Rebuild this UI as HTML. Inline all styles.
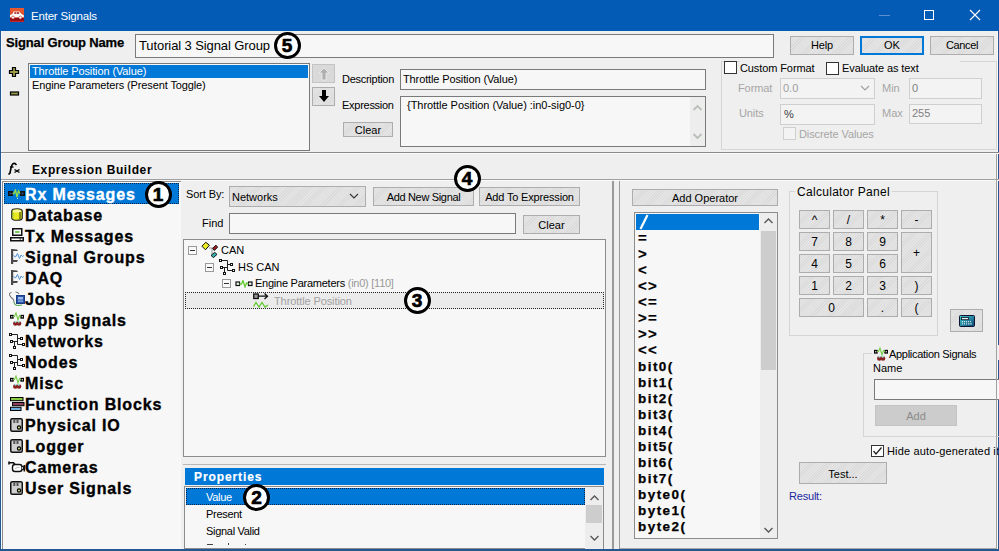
<!DOCTYPE html>
<html><head><meta charset="utf-8"><style>
html,body{margin:0;padding:0;}
body{width:999px;height:551px;overflow:hidden;position:relative;background:#efefef;font-family:"Liberation Sans",sans-serif;}
.t{position:absolute;white-space:nowrap;line-height:1;font-family:"Liberation Sans",sans-serif;}
.r{position:absolute;}
.circ{position:absolute;box-sizing:border-box;border:3px solid #000;border-radius:50%;background:#fff;display:flex;align-items:center;justify-content:center;font-family:"Liberation Sans",sans-serif;font-weight:bold;font-size:19px;line-height:1;-webkit-text-stroke:0.7px #000;}
</style></head><body>
<div class=r style='left:0px;top:0px;width:999px;height:31px;background:#045bb5;box-sizing:border-box;'></div>
<div class=r style='left:0px;top:31px;width:1px;height:520px;background:#24568f;box-sizing:border-box;'></div>
<div class=r style='left:1px;top:31px;width:1px;height:518px;background:#f4fbff;box-sizing:border-box;'></div>
<div class=r style='left:0px;top:549px;width:999px;height:2px;background:#24568f;box-sizing:border-box;'></div>
<div class=r style='left:998px;top:31px;width:1px;height:520px;background:#24568f;box-sizing:border-box;'></div>
<div class=r style='left:997px;top:31px;width:1px;height:518px;background:#fafafa;box-sizing:border-box;'></div>
<svg class=r style='left:10px;top:8px' width=14 height=14 viewBox='0 0 14 14'><defs><linearGradient id='tg' x1='0' y1='0' x2='0' y2='1'><stop offset='0' stop-color='#ea5a30'/><stop offset='0.7' stop-color='#d84828'/><stop offset='0.72' stop-color='#8a0a10'/><stop offset='0.88' stop-color='#9a1014'/><stop offset='1' stop-color='#d03030'/></linearGradient></defs><rect x=0 y=0 width=14 height=14 fill='url(#tg)' /><path d='M0 7 L2.5 6 L3.5 3.6 L9.4 3.6 L11.5 6 L13.8 7.2 L13.8 9.2 L0 9.2 Z' fill='#fff' /><rect x=4.3 y=4.2 width=2.2 height=1.6 fill='#a02020' /><rect x=7 y=4.2 width=2.2 height=1.6 fill='#a02020' /><circle cx=3 cy=9.6 r=1.5 fill='#fff' stroke='#b02020' stroke-width=0.6 /><circle cx=10.3 cy=9.6 r=1.5 fill='#fff' stroke='#b02020' stroke-width=0.6 /></svg>
<div class=t style='left:31px;top:11px;font-size:11.5px;font-weight:normal;color:#fff;letter-spacing:-0.2px;'>Enter Signals</div>
<div class=r style='left:879px;top:15px;width:11px;height:1px;background:#5f8fd0;box-sizing:border-box;'></div>
<div class=r style='left:924px;top:10px;width:10px;height:10px;background:transparent;border:1px solid #fff;box-sizing:border-box;'></div>
<svg class=r style='left:969px;top:9px' width=12 height=12 viewBox='0 0 12 12'><path d='M1 1 L11 11 M11 1 L1 11' stroke='#fff' stroke-width=1.1 fill='none' /></svg>
<div class=t style='left:6px;top:36px;font-size:13px;font-weight:bold;color:#000;letter-spacing:-0.15px;-webkit-text-stroke:0.25px #000'>Signal Group Name</div>
<div class=r style='left:135px;top:34px;width:639px;height:24px;background:#f7f7f7;border:1px solid #7a7a7a;box-sizing:border-box;'></div>
<div class=t style='left:139px;top:39px;font-size:13px;font-weight:normal;color:#000;letter-spacing:-0.1px;'>Tutorial 3 Signal Group</div>
<div class=circ style='left:273.5px;top:31.5px;width:27px;height:27px'><span>5</span></div>
<div class=r style='left:790px;top:36px;width:64px;height:19px;background:repeating-linear-gradient(135deg,#e5e5e5 0px,#e5e5e5 1px,#dbdbdb 1px,#dbdbdb 2px);border:1px solid #adadad;box-sizing:border-box;'></div>
<div class=t style='left:790px;width:64px;text-align:center;top:40px;font-size:11px;font-weight:normal;color:#000;letter-spacing:-0.2px;'>Help</div>
<div class=r style='left:860px;top:36px;width:64px;height:19px;background:repeating-linear-gradient(135deg,#e5e5e5 0px,#e5e5e5 1px,#dbdbdb 1px,#dbdbdb 2px);border:2px solid #0078d7;box-sizing:border-box;'></div>
<div class=t style='left:860px;width:64px;text-align:center;top:40px;font-size:11px;font-weight:normal;color:#000;letter-spacing:0px;'>OK</div>
<div class=r style='left:930px;top:36px;width:64px;height:19px;background:repeating-linear-gradient(135deg,#e5e5e5 0px,#e5e5e5 1px,#dbdbdb 1px,#dbdbdb 2px);border:1px solid #adadad;box-sizing:border-box;'></div>
<div class=t style='left:930px;width:64px;text-align:center;top:40px;font-size:11px;font-weight:normal;color:#000;letter-spacing:-0.35px;'>Cancel</div>
<svg class=r style='left:8px;top:66px' width=12 height=30 viewBox='0 0 12 30'><path d='M4.5 1.5 h3 v3 h3 v3 h-3 v3 h-3 v-3 h-3 v-3 h3 z' fill='#9a9a48' stroke='#000' stroke-width=1.2 /><rect x=2.5 y=26 width=8 height=3 fill='#9a9a48' stroke='#000' stroke-width=1.2 /></svg>
<div class=r style='left:28px;top:63px;width:282px;height:88px;background:#f7f7f7;border:1px solid #7a7a7a;box-sizing:border-box;'></div>
<div class=r style='left:30px;top:65px;width:278px;height:13px;background:#0078d7;box-sizing:border-box;'></div>
<div class=t style='left:32px;top:66px;font-size:11px;font-weight:normal;color:#fff;letter-spacing:-0.12px;'>Throttle Position (Value)</div>
<div class=t style='left:32px;top:80px;font-size:11px;font-weight:normal;color:#000;letter-spacing:-0.12px;'>Engine Parameters (Present Toggle)</div>
<div class=r style='left:312px;top:64px;width:23px;height:19px;background:#d9d9d9;border:1px solid #c4c4c4;box-sizing:border-box;'></div>
<svg class=r style='left:318px;top:67px' width=12 height=14><path d='M6 1 L11 6 L8 6 L8 13 L4 13 L4 6 L1 6 Z' fill='#b0b0b0' stroke='#f0f0f0' stroke-width=0.8 /></svg>
<div class=r style='left:312px;top:87px;width:23px;height:19px;background:repeating-linear-gradient(135deg,#e5e5e5 0px,#e5e5e5 1px,#dbdbdb 1px,#dbdbdb 2px);border:1px solid #adadad;box-sizing:border-box;'></div>
<svg class=r style='left:318px;top:89px' width=12 height=14><path d='M4 1 L8 1 L8 7 L11 7 L6 13 L1 7 L4 7 Z' fill='#000'  /></svg>
<div class=t style='left:342px;top:74px;font-size:11px;font-weight:normal;color:#000;letter-spacing:-0.27px;'>Description</div>
<div class=r style='left:400px;top:69px;width:306px;height:21px;background:#f7f7f7;border:1px solid #7a7a7a;box-sizing:border-box;'></div>
<div class=t style='left:403px;top:74px;font-size:11px;font-weight:normal;color:#000;letter-spacing:-0.12px;'>Throttle Position (Value)</div>
<div class=t style='left:342px;top:100px;font-size:11px;font-weight:normal;color:#000;letter-spacing:-0.27px;'>Expression</div>
<div class=r style='left:400px;top:96px;width:306px;height:51px;background:#f7f7f7;border:1px solid #7a7a7a;box-sizing:border-box;'></div>
<div class=t style='left:407px;top:100px;font-size:11px;font-weight:normal;color:#000;letter-spacing:-0.04px;'>{Throttle Position (Value) :in0-sig0-0}</div>
<div class=r style='left:690px;top:97px;width:15px;height:49px;background:#ededed;box-sizing:border-box;'></div>
<svg class=r style='left:692px;top:103px' width=11 height=38 viewBox='0 0 11 38'><path d='M1.5 7 L5.5 3 L9.5 7' stroke='#b8c0b8' stroke-width=1.8 fill='none' /><path d='M1.5 31 L5.5 35 L9.5 31' stroke='#b8c0b8' stroke-width=1.8 fill='none' /></svg>
<div class=r style='left:343px;top:122px;width:50px;height:15px;background:repeating-linear-gradient(135deg,#e5e5e5 0px,#e5e5e5 1px,#dbdbdb 1px,#dbdbdb 2px);border:1px solid #adadad;box-sizing:border-box;'></div>
<div class=t style='left:343px;width:50px;text-align:center;top:125px;font-size:11px;font-weight:normal;color:#000;letter-spacing:0px;'>Clear</div>
<div class=r style='left:721px;top:61px;width:276px;height:89px;background:transparent;border:1px solid #d5d5d5;box-sizing:border-box;'></div>
<div class=r style='left:740px;top:60px;width:220px;height:4px;background:#efefef;box-sizing:border-box;'></div>
<div class=r style='left:724px;top:61px;width:13px;height:13px;background:#fff;border:1px solid #333;box-sizing:border-box;'></div>
<div class=t style='left:740px;top:63px;font-size:11px;font-weight:normal;color:#000;letter-spacing:-0.1px;'>Custom Format</div>
<div class=r style='left:826px;top:62px;width:13px;height:13px;background:#fff;border:1px solid #333;box-sizing:border-box;'></div>
<div class=t style='left:842px;top:63px;font-size:11px;font-weight:normal;color:#000;letter-spacing:-0.1px;'>Evaluate as text</div>
<div class=t style='left:738px;top:83px;font-size:11px;font-weight:normal;color:#a6a6a6;letter-spacing:-0.1px;'>Format</div>
<div class=r style='left:780px;top:78px;width:95px;height:21px;background:#f3f3f3;border:1px solid #cfcfcf;box-sizing:border-box;'></div>
<div class=t style='left:783px;top:83px;font-size:11px;font-weight:normal;color:#a0a0a0;letter-spacing:0px;'>0.0</div>
<svg class=r style='left:860px;top:85px' width=10 height=6><path d='M1 1 L5 5 L9 1' stroke='#a0a0a0' stroke-width=1.1 fill=none  /></svg>
<div class=t style='left:882px;top:83px;font-size:11px;font-weight:normal;color:#a6a6a6;letter-spacing:0px;'>Min</div>
<div class=r style='left:909px;top:78px;width:73px;height:21px;background:#f3f3f3;border:1px solid #cfcfcf;box-sizing:border-box;'></div>
<div class=t style='left:912px;top:83px;font-size:11px;font-weight:normal;color:#808080;letter-spacing:0px;'>0</div>
<div class=t style='left:739px;top:108px;font-size:11px;font-weight:normal;color:#a6a6a6;letter-spacing:-0.1px;'>Units</div>
<div class=r style='left:780px;top:104px;width:95px;height:21px;background:#f3f3f3;border:1px solid #cfcfcf;box-sizing:border-box;'></div>
<div class=t style='left:784px;top:109px;font-size:11px;font-weight:normal;color:#404040;letter-spacing:0px;'>%</div>
<div class=t style='left:882px;top:108px;font-size:11px;font-weight:normal;color:#a6a6a6;letter-spacing:0px;'>Max</div>
<div class=r style='left:909px;top:104px;width:73px;height:20px;background:#f3f3f3;border:1px solid #cfcfcf;box-sizing:border-box;'></div>
<div class=t style='left:912px;top:108px;font-size:11px;font-weight:normal;color:#808080;letter-spacing:0px;'>255</div>
<div class=r style='left:783px;top:127px;width:13px;height:13px;background:#f3f3f3;border:1px solid #cfcfcf;box-sizing:border-box;'></div>
<div class=t style='left:799px;top:129px;font-size:11px;font-weight:normal;color:#a6a6a6;letter-spacing:-0.1px;'>Discrete Values</div>
<div class=r style='left:1px;top:152px;width:998px;height:1px;background:#8a8a8a;box-sizing:border-box;'></div>
<div class=r style='left:1px;top:153px;width:998px;height:1px;background:#fbfbfb;box-sizing:border-box;'></div>
<div class=t style='left:32px;top:164px;font-size:12px;font-weight:bold;color:#000;letter-spacing:0.6px;'>Expression Builder</div>
<div class=r style='left:2px;top:181px;width:179px;height:368px;background:#f7f7f7;border:1px solid #8c8c8c;box-sizing:border-box;border-right:none;border-bottom:none'></div>
<div class=r style='left:4px;top:183px;width:175px;height:21px;background:#0078d7;border:1px dotted #0a2850;box-sizing:border-box;'></div>
<div class=t style='left:25px;top:187px;font-size:16px;font-weight:bold;color:#fff;letter-spacing:0.85px;-webkit-text-stroke:0.35px #fff'>Rx Messages</div>
<div class=t style='left:25px;top:208px;font-size:16px;font-weight:bold;color:#000;letter-spacing:0.85px;-webkit-text-stroke:0.35px #000'>Database</div>
<div class=t style='left:25px;top:229px;font-size:16px;font-weight:bold;color:#000;letter-spacing:0.85px;-webkit-text-stroke:0.35px #000'>Tx Messages</div>
<div class=t style='left:25px;top:250px;font-size:16px;font-weight:bold;color:#000;letter-spacing:0.85px;-webkit-text-stroke:0.35px #000'>Signal Groups</div>
<div class=t style='left:25px;top:271px;font-size:16px;font-weight:bold;color:#000;letter-spacing:0.85px;-webkit-text-stroke:0.35px #000'>DAQ</div>
<div class=t style='left:25px;top:292px;font-size:16px;font-weight:bold;color:#000;letter-spacing:0.85px;-webkit-text-stroke:0.35px #000'>Jobs</div>
<div class=t style='left:25px;top:313px;font-size:16px;font-weight:bold;color:#000;letter-spacing:0.85px;-webkit-text-stroke:0.35px #000'>App Signals</div>
<div class=t style='left:25px;top:334px;font-size:16px;font-weight:bold;color:#000;letter-spacing:0.85px;-webkit-text-stroke:0.35px #000'>Networks</div>
<div class=t style='left:25px;top:355px;font-size:16px;font-weight:bold;color:#000;letter-spacing:0.85px;-webkit-text-stroke:0.35px #000'>Nodes</div>
<div class=t style='left:25px;top:376px;font-size:16px;font-weight:bold;color:#000;letter-spacing:0.85px;-webkit-text-stroke:0.35px #000'>Misc</div>
<div class=t style='left:25px;top:397px;font-size:16px;font-weight:bold;color:#000;letter-spacing:0.85px;-webkit-text-stroke:0.35px #000'>Function Blocks</div>
<div class=t style='left:25px;top:418px;font-size:16px;font-weight:bold;color:#000;letter-spacing:0.85px;-webkit-text-stroke:0.35px #000'>Physical IO</div>
<div class=t style='left:25px;top:439px;font-size:16px;font-weight:bold;color:#000;letter-spacing:0.85px;-webkit-text-stroke:0.35px #000'>Logger</div>
<div class=t style='left:25px;top:460px;font-size:16px;font-weight:bold;color:#000;letter-spacing:0.85px;-webkit-text-stroke:0.35px #000'>Cameras</div>
<div class=t style='left:25px;top:481px;font-size:16px;font-weight:bold;color:#000;letter-spacing:0.85px;-webkit-text-stroke:0.35px #000'>User Signals</div>
<div class=circ style='left:144.5px;top:180.5px;width:27px;height:27px'><span>1</span></div>
<div class=r style='left:1px;top:179px;width:998px;height:1px;background:#a0a0a0;box-sizing:border-box;'></div>
<div class=r style='left:1px;top:180px;width:998px;height:1px;background:#fbfbfb;box-sizing:border-box;'></div>
<div class=t style='left:186px;top:189px;font-size:11px;font-weight:normal;color:#000;letter-spacing:-0.1px;'>Sort By:</div>
<div class=r style='left:229px;top:186px;width:137px;height:21px;background:repeating-linear-gradient(135deg,#e5e5e5 0px,#e5e5e5 1px,#dbdbdb 1px,#dbdbdb 2px);border:1px solid #adadad;box-sizing:border-box;'></div>
<div class=t style='left:232px;top:192px;font-size:11px;font-weight:normal;color:#000;letter-spacing:0px;'>Networks</div>
<svg class=r style='left:349px;top:193px' width=10 height=6><path d='M1 1 L5 5 L9 1' stroke='#333' stroke-width=1.1 fill=none  /></svg>
<div class=r style='left:373px;top:187px;width:101px;height:19px;background:repeating-linear-gradient(135deg,#e5e5e5 0px,#e5e5e5 1px,#dbdbdb 1px,#dbdbdb 2px);border:1px solid #adadad;box-sizing:border-box;'></div>
<div class=t style='left:373px;width:101px;text-align:center;top:192px;font-size:11px;font-weight:normal;color:#000;letter-spacing:-0.33px;'>Add New Signal</div>
<div class=r style='left:479px;top:187px;width:101px;height:19px;background:repeating-linear-gradient(135deg,#e5e5e5 0px,#e5e5e5 1px,#dbdbdb 1px,#dbdbdb 2px);border:1px solid #adadad;box-sizing:border-box;'></div>
<div class=t style='left:479px;width:101px;text-align:center;top:192px;font-size:11px;font-weight:normal;color:#000;letter-spacing:-0.17px;'>Add To Expression</div>
<div class=circ style='left:453.5px;top:164.5px;width:27px;height:27px'><span>4</span></div>
<div class=t style='left:202px;top:218px;font-size:11px;font-weight:normal;color:#000;letter-spacing:0px;'>Find</div>
<div class=r style='left:229px;top:213px;width:287px;height:21px;background:#f7f7f7;border:1px solid #7a7a7a;box-sizing:border-box;'></div>
<div class=r style='left:523px;top:215px;width:57px;height:19px;background:repeating-linear-gradient(135deg,#e5e5e5 0px,#e5e5e5 1px,#dbdbdb 1px,#dbdbdb 2px);border:1px solid #adadad;box-sizing:border-box;'></div>
<div class=t style='left:523px;width:57px;text-align:center;top:220px;font-size:11px;font-weight:normal;color:#000;letter-spacing:0px;'>Clear</div>
<div class=r style='left:183px;top:239px;width:423px;height:218px;background:#f7f7f7;border:1px solid #8c8c8c;box-sizing:border-box;'></div>
<div class=r style='left:188px;top:246px;width:9px;height:9px;background:#fafafa;border:1px solid #9a9a9a;box-sizing:border-box;'></div>
<div class=r style='left:190px;top:250px;width:5px;height:1px;background:#333;box-sizing:border-box;'></div>
<div class=t style='left:221px;top:245px;font-size:11px;font-weight:normal;color:#000;letter-spacing:0px;'>CAN</div>
<div class=r style='left:205px;top:263px;width:9px;height:9px;background:#fafafa;border:1px solid #9a9a9a;box-sizing:border-box;'></div>
<div class=r style='left:207px;top:267px;width:5px;height:1px;background:#333;box-sizing:border-box;'></div>
<div class=t style='left:238px;top:262px;font-size:11px;font-weight:normal;color:#000;letter-spacing:0px;'>HS CAN</div>
<div class=r style='left:222px;top:279px;width:9px;height:9px;background:#fafafa;border:1px solid #9a9a9a;box-sizing:border-box;'></div>
<div class=r style='left:224px;top:283px;width:5px;height:1px;background:#333;box-sizing:border-box;'></div>
<div class=t style='left:255px;top:278px;font-size:11px;font-weight:normal;color:#000;letter-spacing:-0.25px;'>Engine Parameters <span style="color:#999">(in0) [110]</span></div>
<div class=r style='left:185px;top:292px;width:419px;height:17px;box-sizing:border-box;border:1px dotted #222;background:#ebebeb'></div>
<div class=t style='left:274px;top:296px;font-size:11px;font-weight:normal;color:#a0a0a0;letter-spacing:-0.1px;'>Throttle Position</div>
<div class=circ style='left:403.5px;top:286.5px;width:27px;height:27px'><span>3</span></div>
<div class=r style='left:183px;top:457px;width:423px;height:7px;background:#efefef;box-sizing:border-box;'></div>
<div class=r style='left:183px;top:464px;width:423px;height:1px;background:#b8b8b8;box-sizing:border-box;'></div>
<div class=r style='left:185px;top:468px;width:419px;height:17px;background:#0078d7;box-sizing:border-box;'></div>
<div class=t style='left:194px;top:471px;font-size:12px;font-weight:bold;color:#fff;letter-spacing:0.9px;-webkit-text-stroke:0.2px #fff'>Properties</div>
<div class=r style='left:184px;top:486px;width:420px;height:63px;background:#f7f7f7;border:1px solid #8c8c8c;box-sizing:border-box;'></div>
<div class=r style='left:186px;top:488px;width:399px;height:17px;background:#0078d7;border:1px dotted #0a2850;box-sizing:border-box;'></div>
<div class=t style='left:206px;top:492px;font-size:11px;font-weight:normal;color:#fff;letter-spacing:-0.3px;'>Value</div>
<div class=t style='left:206px;top:509px;font-size:11px;font-weight:normal;color:#000;letter-spacing:-0.3px;'>Present</div>
<div class=t style='left:206px;top:526px;font-size:11px;font-weight:normal;color:#000;letter-spacing:-0.3px;'>Signal Valid</div>
<div class=circ style='left:243.0px;top:484.0px;width:27px;height:27px'><span>2</span></div>
<div class=r style='left:207px;top:544px;width:6px;height:1px;background:#444;box-sizing:border-box;'></div>
<div class=r style='left:228px;top:543px;width:1px;height:2px;background:#444;box-sizing:border-box;'></div>
<div class=r style='left:245px;top:544px;width:1px;height:1px;background:#444;box-sizing:border-box;'></div>
<div class=r style='left:585px;top:487px;width:18px;height:62px;background:#ededed;box-sizing:border-box;'></div>
<div class=r style='left:586px;top:505px;width:16px;height:18px;background:#cdcdcd;box-sizing:border-box;'></div>
<svg class=r style='left:589px;top:494px' width=11 height=50><path d='M1.5 6 L5.5 2 L9.5 6' stroke='#555' stroke-width=1.3 fill=none  /><path d='M1.5 42 L5.5 46 L9.5 42' stroke='#555' stroke-width=1.3 fill=none  /></svg>
<div class=r style='left:612px;top:181px;width:2px;height:368px;background:#9a9a9a;box-sizing:border-box;'></div>
<div class=r style='left:619px;top:181px;width:1px;height:368px;background:#9a9a9a;box-sizing:border-box;'></div>
<div class=r style='left:632px;top:189px;width:146px;height:17px;background:repeating-linear-gradient(135deg,#e5e5e5 0px,#e5e5e5 1px,#dbdbdb 1px,#dbdbdb 2px);border:1px solid #adadad;box-sizing:border-box;'></div>
<div class=t style='left:632px;width:146px;text-align:center;top:193px;font-size:11px;font-weight:normal;color:#000;letter-spacing:0px;'>Add Operator</div>
<div class=r style='left:634px;top:212px;width:144px;height:327px;background:#f7f7f7;border:1px solid #8c8c8c;box-sizing:border-box;'></div>
<div class=r style='left:636px;top:214px;width:123px;height:16px;background:#0078d7;box-sizing:border-box;'></div>
<svg class=r style='left:638px;top:214px' width=12 height=16 viewBox='0 0 12 16'><path d='M3 14 L9 2' stroke='#fff' stroke-width=2.2 stroke-linecap='square' /></svg>
<div class=t style='left:638px;top:230px;font-size:15px;font-weight:bold;color:#000;letter-spacing:1.2px;-webkit-text-stroke:0.2px #000'>=</div>
<div class=t style='left:638px;top:246px;font-size:15px;font-weight:bold;color:#000;letter-spacing:1.2px;-webkit-text-stroke:0.2px #000'>&gt;</div>
<div class=t style='left:638px;top:262px;font-size:15px;font-weight:bold;color:#000;letter-spacing:1.2px;-webkit-text-stroke:0.2px #000'>&lt;</div>
<div class=t style='left:638px;top:278px;font-size:15px;font-weight:bold;color:#000;letter-spacing:1.2px;-webkit-text-stroke:0.2px #000'>&lt;&gt;</div>
<div class=t style='left:638px;top:294px;font-size:15px;font-weight:bold;color:#000;letter-spacing:1.2px;-webkit-text-stroke:0.2px #000'>&lt;=</div>
<div class=t style='left:638px;top:310px;font-size:15px;font-weight:bold;color:#000;letter-spacing:1.2px;-webkit-text-stroke:0.2px #000'>&gt;=</div>
<div class=t style='left:638px;top:326px;font-size:15px;font-weight:bold;color:#000;letter-spacing:1.2px;-webkit-text-stroke:0.2px #000'>&gt;&gt;</div>
<div class=t style='left:638px;top:342px;font-size:15px;font-weight:bold;color:#000;letter-spacing:1.2px;-webkit-text-stroke:0.2px #000'>&lt;&lt;</div>
<div class=t style='left:638px;top:360px;font-size:13.5px;font-weight:bold;color:#000;letter-spacing:1.45px;-webkit-text-stroke:0.25px #000'>bit0(</div>
<div class=t style='left:638px;top:376px;font-size:13.5px;font-weight:bold;color:#000;letter-spacing:1.45px;-webkit-text-stroke:0.25px #000'>bit1(</div>
<div class=t style='left:638px;top:392px;font-size:13.5px;font-weight:bold;color:#000;letter-spacing:1.45px;-webkit-text-stroke:0.25px #000'>bit2(</div>
<div class=t style='left:638px;top:408px;font-size:13.5px;font-weight:bold;color:#000;letter-spacing:1.45px;-webkit-text-stroke:0.25px #000'>bit3(</div>
<div class=t style='left:638px;top:424px;font-size:13.5px;font-weight:bold;color:#000;letter-spacing:1.45px;-webkit-text-stroke:0.25px #000'>bit4(</div>
<div class=t style='left:638px;top:440px;font-size:13.5px;font-weight:bold;color:#000;letter-spacing:1.45px;-webkit-text-stroke:0.25px #000'>bit5(</div>
<div class=t style='left:638px;top:456px;font-size:13.5px;font-weight:bold;color:#000;letter-spacing:1.45px;-webkit-text-stroke:0.25px #000'>bit6(</div>
<div class=t style='left:638px;top:472px;font-size:13.5px;font-weight:bold;color:#000;letter-spacing:1.45px;-webkit-text-stroke:0.25px #000'>bit7(</div>
<div class=t style='left:638px;top:488px;font-size:13.5px;font-weight:bold;color:#000;letter-spacing:1.45px;-webkit-text-stroke:0.25px #000'>byte0(</div>
<div class=t style='left:638px;top:504px;font-size:13.5px;font-weight:bold;color:#000;letter-spacing:1.45px;-webkit-text-stroke:0.25px #000'>byte1(</div>
<div class=t style='left:638px;top:520px;font-size:13.5px;font-weight:bold;color:#000;letter-spacing:1.45px;-webkit-text-stroke:0.25px #000'>byte2(</div>
<div class=r style='left:760px;top:213px;width:17px;height:325px;background:#ededed;box-sizing:border-box;'></div>
<div class=r style='left:761px;top:231px;width:15px;height:139px;background:#cdcdcd;box-sizing:border-box;'></div>
<svg class=r style='left:763px;top:217px' width=11 height=320><path d='M1.5 6 L5.5 2 L9.5 6' stroke='#555' stroke-width=1.3 fill=none  /><path d='M1.5 311 L5.5 315 L9.5 311' stroke='#555' stroke-width=1.3 fill=none  /></svg>
<div class=r style='left:789px;top:191px;width:149px;height:145px;background:transparent;border:1px solid #d5d5d5;box-sizing:border-box;'></div>
<div class=r style='left:795px;top:185px;width:97px;height:11px;background:#efefef;box-sizing:border-box;'></div>
<div class=t style='left:797px;top:186px;font-size:12px;font-weight:normal;color:#000;letter-spacing:0.3px;'>Calculator Panel</div>
<div class=r style='left:799px;top:210px;width:31px;height:19px;background:repeating-linear-gradient(135deg,#e5e5e5 0px,#e5e5e5 1px,#dbdbdb 1px,#dbdbdb 2px);border:1px solid #adadad;box-sizing:border-box;'></div>
<div class=t style='left:799px;width:31px;text-align:center;top:214px;font-size:12px;font-weight:normal;color:#000;letter-spacing:0px;'>^</div>
<div class=r style='left:833px;top:210px;width:31px;height:19px;background:repeating-linear-gradient(135deg,#e5e5e5 0px,#e5e5e5 1px,#dbdbdb 1px,#dbdbdb 2px);border:1px solid #adadad;box-sizing:border-box;'></div>
<div class=t style='left:833px;width:31px;text-align:center;top:214px;font-size:12px;font-weight:normal;color:#000;letter-spacing:0px;'>/</div>
<div class=r style='left:867px;top:210px;width:31px;height:19px;background:repeating-linear-gradient(135deg,#e5e5e5 0px,#e5e5e5 1px,#dbdbdb 1px,#dbdbdb 2px);border:1px solid #adadad;box-sizing:border-box;'></div>
<div class=t style='left:867px;width:31px;text-align:center;top:214px;font-size:12px;font-weight:normal;color:#000;letter-spacing:0px;'>*</div>
<div class=r style='left:901px;top:210px;width:31px;height:19px;background:repeating-linear-gradient(135deg,#e5e5e5 0px,#e5e5e5 1px,#dbdbdb 1px,#dbdbdb 2px);border:1px solid #adadad;box-sizing:border-box;'></div>
<div class=t style='left:901px;width:31px;text-align:center;top:214px;font-size:12px;font-weight:normal;color:#000;letter-spacing:0px;'>-</div>
<div class=r style='left:799px;top:232px;width:31px;height:19px;background:repeating-linear-gradient(135deg,#e5e5e5 0px,#e5e5e5 1px,#dbdbdb 1px,#dbdbdb 2px);border:1px solid #adadad;box-sizing:border-box;'></div>
<div class=t style='left:799px;width:31px;text-align:center;top:236px;font-size:12px;font-weight:normal;color:#000;letter-spacing:0px;'>7</div>
<div class=r style='left:833px;top:232px;width:31px;height:19px;background:repeating-linear-gradient(135deg,#e5e5e5 0px,#e5e5e5 1px,#dbdbdb 1px,#dbdbdb 2px);border:1px solid #adadad;box-sizing:border-box;'></div>
<div class=t style='left:833px;width:31px;text-align:center;top:236px;font-size:12px;font-weight:normal;color:#000;letter-spacing:0px;'>8</div>
<div class=r style='left:867px;top:232px;width:31px;height:19px;background:repeating-linear-gradient(135deg,#e5e5e5 0px,#e5e5e5 1px,#dbdbdb 1px,#dbdbdb 2px);border:1px solid #adadad;box-sizing:border-box;'></div>
<div class=t style='left:867px;width:31px;text-align:center;top:236px;font-size:12px;font-weight:normal;color:#000;letter-spacing:0px;'>9</div>
<div class=r style='left:901px;top:232px;width:31px;height:41px;background:repeating-linear-gradient(135deg,#e5e5e5 0px,#e5e5e5 1px,#dbdbdb 1px,#dbdbdb 2px);border:1px solid #adadad;box-sizing:border-box;'></div>
<div class=t style='left:901px;width:31px;text-align:center;top:247px;font-size:12px;font-weight:normal;color:#000;letter-spacing:0px;'>+</div>
<div class=r style='left:799px;top:254px;width:31px;height:19px;background:repeating-linear-gradient(135deg,#e5e5e5 0px,#e5e5e5 1px,#dbdbdb 1px,#dbdbdb 2px);border:1px solid #adadad;box-sizing:border-box;'></div>
<div class=t style='left:799px;width:31px;text-align:center;top:258px;font-size:12px;font-weight:normal;color:#000;letter-spacing:0px;'>4</div>
<div class=r style='left:833px;top:254px;width:31px;height:19px;background:repeating-linear-gradient(135deg,#e5e5e5 0px,#e5e5e5 1px,#dbdbdb 1px,#dbdbdb 2px);border:1px solid #adadad;box-sizing:border-box;'></div>
<div class=t style='left:833px;width:31px;text-align:center;top:258px;font-size:12px;font-weight:normal;color:#000;letter-spacing:0px;'>5</div>
<div class=r style='left:867px;top:254px;width:31px;height:19px;background:repeating-linear-gradient(135deg,#e5e5e5 0px,#e5e5e5 1px,#dbdbdb 1px,#dbdbdb 2px);border:1px solid #adadad;box-sizing:border-box;'></div>
<div class=t style='left:867px;width:31px;text-align:center;top:258px;font-size:12px;font-weight:normal;color:#000;letter-spacing:0px;'>6</div>
<div class=r style='left:799px;top:276px;width:31px;height:19px;background:repeating-linear-gradient(135deg,#e5e5e5 0px,#e5e5e5 1px,#dbdbdb 1px,#dbdbdb 2px);border:1px solid #adadad;box-sizing:border-box;'></div>
<div class=t style='left:799px;width:31px;text-align:center;top:280px;font-size:12px;font-weight:normal;color:#000;letter-spacing:0px;'>1</div>
<div class=r style='left:833px;top:276px;width:31px;height:19px;background:repeating-linear-gradient(135deg,#e5e5e5 0px,#e5e5e5 1px,#dbdbdb 1px,#dbdbdb 2px);border:1px solid #adadad;box-sizing:border-box;'></div>
<div class=t style='left:833px;width:31px;text-align:center;top:280px;font-size:12px;font-weight:normal;color:#000;letter-spacing:0px;'>2</div>
<div class=r style='left:867px;top:276px;width:31px;height:19px;background:repeating-linear-gradient(135deg,#e5e5e5 0px,#e5e5e5 1px,#dbdbdb 1px,#dbdbdb 2px);border:1px solid #adadad;box-sizing:border-box;'></div>
<div class=t style='left:867px;width:31px;text-align:center;top:280px;font-size:12px;font-weight:normal;color:#000;letter-spacing:0px;'>3</div>
<div class=r style='left:901px;top:276px;width:31px;height:19px;background:repeating-linear-gradient(135deg,#e5e5e5 0px,#e5e5e5 1px,#dbdbdb 1px,#dbdbdb 2px);border:1px solid #adadad;box-sizing:border-box;'></div>
<div class=t style='left:901px;width:31px;text-align:center;top:280px;font-size:12px;font-weight:normal;color:#000;letter-spacing:0px;'>)</div>
<div class=r style='left:799px;top:298px;width:65px;height:19px;background:repeating-linear-gradient(135deg,#e5e5e5 0px,#e5e5e5 1px,#dbdbdb 1px,#dbdbdb 2px);border:1px solid #adadad;box-sizing:border-box;'></div>
<div class=t style='left:799px;width:65px;text-align:center;top:302px;font-size:12px;font-weight:normal;color:#000;letter-spacing:0px;'>0</div>
<div class=r style='left:867px;top:298px;width:31px;height:19px;background:repeating-linear-gradient(135deg,#e5e5e5 0px,#e5e5e5 1px,#dbdbdb 1px,#dbdbdb 2px);border:1px solid #adadad;box-sizing:border-box;'></div>
<div class=t style='left:867px;width:31px;text-align:center;top:302px;font-size:12px;font-weight:normal;color:#000;letter-spacing:0px;'>.</div>
<div class=r style='left:901px;top:298px;width:31px;height:19px;background:repeating-linear-gradient(135deg,#e5e5e5 0px,#e5e5e5 1px,#dbdbdb 1px,#dbdbdb 2px);border:1px solid #adadad;box-sizing:border-box;'></div>
<div class=t style='left:901px;width:31px;text-align:center;top:302px;font-size:12px;font-weight:normal;color:#000;letter-spacing:0px;'>(</div>
<div class=r style='left:950px;top:309px;width:33px;height:23px;background:repeating-linear-gradient(135deg,#e5e5e5 0px,#e5e5e5 1px,#dbdbdb 1px,#dbdbdb 2px);border:1px solid #adadad;box-sizing:border-box;'></div>
<svg class=r style='left:959px;top:315px' width=16 height=12 viewBox='0 0 16 12'><defs><linearGradient id='cg' x1='0' y1='0' x2='1' y2='1'><stop offset='0' stop-color='#40d0d0'/><stop offset='1' stop-color='#104070'/></linearGradient></defs><rect x=0.5 y=0.5 width=15 height=11 rx=1 fill='url(#cg)' stroke='#0a1430' /><rect x=2.5 y=2.5 width=7 height=2.2 fill='#e8f8f8' stroke='#061020' stroke-width=0.8 /><path d='M3 6.7 H13 M3 8.9 H10' stroke='#fff' stroke-width=1 stroke-dasharray='1 1' /><path d='M10.5 8.9 H13' stroke='#aee' stroke-width=1 /></svg>
<div class=r style='left:863px;top:353px;width:136px;height:84px;background:transparent;border:1px solid #d5d5d5;box-sizing:border-box;border-right:none'></div>
<div class=r style='left:872px;top:345px;width:127px;height:15px;background:#efefef;box-sizing:border-box;'></div>
<div class=t style='left:889px;top:349px;font-size:11px;font-weight:normal;color:#000;letter-spacing:-0.3px;'>Application Signals</div>
<div class=t style='left:873px;top:363px;font-size:11px;font-weight:normal;color:#000;letter-spacing:0px;'>Name</div>
<div class=r style='left:874px;top:379px;width:125px;height:21px;background:#f7f7f7;border:1px solid #7a7a7a;box-sizing:border-box;border-right:none'></div>
<div class=r style='left:875px;top:405px;width:82px;height:21px;background:#cccccc;border:1px solid #c4c4c4;box-sizing:border-box;'></div>
<div class=t style='left:875px;width:82px;text-align:center;top:411px;font-size:11px;font-weight:normal;color:#8a8a8a;letter-spacing:0px;'>Add</div>
<div class=r style='left:871px;top:445px;width:13px;height:12px;background:#fff;border:1px solid #333;box-sizing:border-box;'></div>
<svg class=r style='left:872px;top:446px' width=11 height=10><path d='M1.5 5 L4 8 L9.5 1.5' stroke='#222' stroke-width=1.3 fill=none  /></svg>
<div class=t style='left:887px;top:446px;font-size:11px;font-weight:normal;color:#000;letter-spacing:0.15px;'>Hide auto-generated items</div>
<div class=r style='left:799px;top:462px;width:88px;height:22px;background:repeating-linear-gradient(135deg,#e5e5e5 0px,#e5e5e5 1px,#dbdbdb 1px,#dbdbdb 2px);border:1px solid #adadad;box-sizing:border-box;'></div>
<div class=t style='left:799px;width:88px;text-align:center;top:469px;font-size:11px;font-weight:normal;color:#000;letter-spacing:0px;'>Test...</div>
<div class=t style='left:789px;top:491px;font-size:11px;font-weight:normal;color:#1c28a0;letter-spacing:-0.2px;'>Result:</div>
<div class=r style='left:996px;top:154px;width:1px;height:395px;background:#a0a0a0;box-sizing:border-box;'></div>
<div class=r style='left:620px;top:548px;width:377px;height:1px;background:#a8a8a8;box-sizing:border-box;'></div>
<svg class=r style='left:8px;top:189px' width=17 height=9 viewBox='0 0 17 9'><rect x=0.75 y=2.75 width=3.5 height=3.5 fill='#2a4a7a' stroke='#111' stroke-width=1.5 /><rect x=12.75 y=2.75 width=3.5 height=3.5 fill='#2a4a7a' stroke='#111' stroke-width=1.5 /><path d='M4.5 4.5 L6 4.5 L7.5 1 L9 8 L10.5 2 L12 4.5' stroke='#9d4' stroke-width=1.3 fill='none' /></svg>
<div class=r style='left:17px;top:198px;width:1px;height:1px;background:#cfe8ff;box-sizing:border-box;'></div>
<svg class=r style='left:11px;top:208px' width=12 height=13 viewBox='0 0 12 13'><path d='M0.75 3 Q0.75 0.75 6 0.75 Q11.25 0.75 11.25 3 L11.25 10 Q11.25 12.25 6 12.25 Q0.75 12.25 0.75 10 Z' fill='#e8e820' stroke='#222' stroke-width=1.2 /><ellipse cx=6 cy=3 rx=4 ry=1.6 fill='#f4f4a0' /><path d='M2 5 v6' stroke='#8c4' stroke-width=1.5 stroke-dasharray='1 1' /><path d='M9 4 v7' stroke='#6a6a10' stroke-width=1.5 /></svg>
<svg class=r style='left:10px;top:228px' width=14 height=14 viewBox='0 0 14 14'><rect x=2.75 y=0.75 width=9 height=6.5 fill='#fff' stroke='#111' stroke-width=1.5 /><rect x=5 y=3 width=4.5 height=2 fill='#7c5' /><rect x=0.75 y=9.75 width=12.5 height=3 fill='#fff' stroke='#111' stroke-width=1.5 /><path d='M9.5 11 h1.5' stroke='#111' stroke-width=1 /></svg>
<svg class=r style='left:10px;top:248px' width=16 height=18 viewBox='0 0 16 18'><rect x=1 y=1 width=2.2 height=15 fill='#4a4a4a' /><path d='M1 1 L7 1.5 L8 3 L3 3 Z' fill='#4a4a4a' /><path d='M3 12 L8 12 L7 14 L3 14 Z' fill='#4a4a4a' /><path d='M3.5 7.5 L5.5 9 L7.5 5.5 L9.5 10.5 L11 7 L12.5 8.5 L13.8 7.5' stroke='#4a90d0' stroke-width=1 fill='none' /></svg>
<svg class=r style='left:10px;top:269px' width=16 height=18 viewBox='0 0 16 18'><rect x=1 y=1 width=2.2 height=15 fill='#4a4a4a' /><path d='M1 1 L7 1.5 L8 3 L3 3 Z' fill='#4a4a4a' /><path d='M3 12 L8 12 L7 14 L3 14 Z' fill='#4a4a4a' /><path d='M3.5 7.5 L5.5 9 L7.5 5.5 L9.5 10.5 L11 7 L12.5 8.5 L13.8 7.5' stroke='#4a90d0' stroke-width=1 fill='none' /></svg>
<svg class=r style='left:9px;top:291px' width=16 height=16 viewBox='0 0 16 16'><path d='M2.5 1.5 Q0 2 0.5 4 Q2 7 4.5 8.5 L5 11' stroke='#777' stroke-width=1.1 fill='none' /><path d='M5 11 Q5.5 14.5 9 14.5 L13 14' stroke='#5a5' stroke-width=1.1 fill='none' /><path d='M6.5 1 Q9 1 10 3' stroke='#777' stroke-width=1.1 fill='none' /><rect x=7.5 y=4.5 width=8 height=8 fill='#2a55a8' stroke='#1c3c80' /><rect x=9 y=6 width=5 height=2.5 fill='#9ab8e8' /><rect x=9 y=9.5 width=5 height=1.2 fill='#9ab8e8' /></svg>
<svg class=r style='left:10px;top:312px' width=14 height=14 viewBox='0 0 14 14'><rect x=0.5 y=3.5 width=2.5 height=2.5 fill='#fff' stroke='#000' stroke-width=1.3 /><rect x=11 y=3.5 width=2.5 height=2.5 fill='#fff' stroke='#000' stroke-width=1.3 /><path d='M3 4.5 L4.5 4.5 L6 1 L8 8 L9.5 3.5 L11 4.5' stroke='#7c4' stroke-width=1.1 fill='none' /><circle cx=5.3 cy=11.5 r=2.3 fill='#8a2020' /><circle cx=9 cy=11.5 r=2.3 fill='#8a2020' /><circle cx=5.5 cy=9.8 r=1 fill='#9ee' /><circle cx=8.8 cy=9.8 r=1 fill='#9ee' /></svg>
<svg class=r style='left:9px;top:333px' width=16 height=16 viewBox='0 0 16 16'><path d='M3 1.5 H8.5 V11.5 H13 M8.5 5.5 H11 M4 8.5 H8.5 M5.5 9 V13' stroke='#222' stroke-width=1 fill='none' /><g fill='#fff' stroke='#111' stroke-width=1><rect x=0.5 y=0.5 width=2 height=2 /><rect x=11.5 y=4.5 width=2 height=2 /><rect x=1.5 y=7.5 width=2 height=2 /><rect x=13.5 y=10.5 width=2 height=2 /><rect x=4.5 y=13.5 width=2 height=2 /></g></svg>
<svg class=r style='left:9px;top:354px' width=16 height=16 viewBox='0 0 16 16'><path d='M3 1.5 H8.5 V11.5 H13 M8.5 5.5 H11 M4 8.5 H8.5 M5.5 9 V13' stroke='#222' stroke-width=1 fill='none' /><g fill='#fff' stroke='#111' stroke-width=1><rect x=0.5 y=0.5 width=2 height=2 /><rect x=11.5 y=4.5 width=2 height=2 /><rect x=1.5 y=7.5 width=2 height=2 /><rect x=13.5 y=10.5 width=2 height=2 /><rect x=4.5 y=13.5 width=2 height=2 /></g></svg>
<svg class=r style='left:10px;top:375px' width=14 height=14 viewBox='0 0 14 14'><rect x=0.5 y=3.5 width=2.5 height=2.5 fill='#fff' stroke='#000' stroke-width=1.3 /><rect x=11 y=3.5 width=2.5 height=2.5 fill='#fff' stroke='#000' stroke-width=1.3 /><path d='M3 4.5 L4.5 4.5 L6 1 L8 8 L9.5 3.5 L11 4.5' stroke='#7c4' stroke-width=1.1 fill='none' /><circle cx=5.3 cy=11.5 r=2.3 fill='#8a2020' /><circle cx=9 cy=11.5 r=2.3 fill='#8a2020' /><circle cx=5.5 cy=9.8 r=1 fill='#9ee' /><circle cx=8.8 cy=9.8 r=1 fill='#9ee' /></svg>
<svg class=r style='left:10px;top:397px' width=15 height=14 viewBox='0 0 15 14'><rect x=0.5 y=0.5 width=12.5 height=3.2 fill='#8c4' stroke='#000' stroke-width=1 /><rect x=2.5 y=5.5 width=11.5 height=3.2 fill='#904060' stroke='#000' stroke-width=1 /><rect x=0.5 y=10.3 width=10.5 height=3.2 fill='#6ab0e0' stroke='#000' stroke-width=1 /></svg>
<svg class=r style='left:10px;top:418px' width=13 height=14 viewBox='0 0 13 14'><rect x=0.75 y=0.75 width=11.5 height=12.5 rx=1.5 fill='#cfcfcf' stroke='#111' stroke-width=1.5 /><rect x=3.3 y=1.5 width=2 height=3.5 fill='#555' /><rect x=6.5 y=1.5 width=2 height=3.5 fill='#555' /><circle cx=9 cy=9.5 r=1.6 fill='#cde080' stroke='#000' stroke-width=1.2 /></svg>
<svg class=r style='left:10px;top:439px' width=13 height=14 viewBox='0 0 13 14'><rect x=0.75 y=0.75 width=11.5 height=12.5 rx=1.5 fill='#cfcfcf' stroke='#111' stroke-width=1.5 /><rect x=3.3 y=1.5 width=2 height=3.5 fill='#555' /><rect x=6.5 y=1.5 width=2 height=3.5 fill='#555' /><circle cx=9 cy=9.5 r=1.6 fill='#cde080' stroke='#000' stroke-width=1.2 /></svg>
<svg class=r style='left:10px;top:481px' width=13 height=14 viewBox='0 0 13 14'><rect x=0.75 y=0.75 width=11.5 height=12.5 rx=1.5 fill='#cfcfcf' stroke='#111' stroke-width=1.5 /><rect x=3.3 y=1.5 width=2 height=3.5 fill='#555' /><rect x=6.5 y=1.5 width=2 height=3.5 fill='#555' /><circle cx=9 cy=9.5 r=1.6 fill='#cde080' stroke='#000' stroke-width=1.2 /></svg>
<svg class=r style='left:8px;top:461px' width=18 height=12 viewBox='0 0 18 12'><path d='M1 0.5 L1 3.5 M1 1.8 L5.5 1.8 L7 3.5' stroke='#111' stroke-width=1.6 fill='none' /><rect x=4.5 y=3.5 width=9.5 height=7 rx=2.5 fill='#fff' stroke='#111' stroke-width=1.4 /><path d='M14 5.5 H15.5 V8.5 H14' stroke='#111' stroke-width=1 fill='#ccd' /><rect x=15.5 y=4 width=1.6 height=6.5 fill='#111' /><path d='M7 8 Q9 5.5 11.5 6.5' stroke='#aaa' stroke-width=0.8 fill='none' /></svg>
<svg class=r style='left:874px;top:347px' width=14 height=14 viewBox='0 0 14 14'><rect x=0.5 y=3.5 width=2.5 height=2.5 fill='#fff' stroke='#000' stroke-width=1.3 /><rect x=11 y=3.5 width=2.5 height=2.5 fill='#fff' stroke='#000' stroke-width=1.3 /><path d='M3 4.5 L4.5 4.5 L6 1 L8 8 L9.5 3.5 L11 4.5' stroke='#7c4' stroke-width=1.1 fill='none' /><circle cx=5.3 cy=11.5 r=2.3 fill='#8a2020' /><circle cx=9 cy=11.5 r=2.3 fill='#8a2020' /><circle cx=5.5 cy=9.8 r=1 fill='#9ee' /><circle cx=8.8 cy=9.8 r=1 fill='#9ee' /></svg>
<svg class=r style='left:6px;top:161px' width=16 height=16 viewBox='0 0 16 16'><path d='M2.5 13.5 L4 12 L5 7 L6 4 Q7 2 9 2.5 L10.5 4' stroke='#000' stroke-width=1.6 fill='none' /><path d='M4 6 L7.5 6' stroke='#000' stroke-width=1.4 /><path d='M8.5 8.5 L13.5 11.5 M13.5 8.5 L8.5 11.5' stroke='#000' stroke-width=1.4 /></svg>
<svg class=r style='left:201px;top:241px' width=18 height=18 viewBox='0 0 18 18'><path d='M8 7 H12 M11 7 V13' stroke='#999' stroke-width=1 fill='none' /><path d='M0.9 5.2 L4.8 1.3 L8.4 4.2 L4.5 8.8 Z' fill='#ee2' stroke='#111' stroke-width=1 /><path d='M11.7 7.2 L15 4.2 L16.6 6.2 L13.3 9.5 Z' fill='#a02020' stroke='#111' stroke-width=1 /><path d='M10 14.4 L13.7 11.4 L16 13.4 L12.4 16.6 Z' fill='#30b0b0' stroke='#111' stroke-width=1 /></svg>
<svg class=r style='left:219px;top:259px' width=16 height=16 viewBox='0 0 16 16'><path d='M3 1.5 H8.5 V11.5 H13 M8.5 5.5 H11 M4 8.5 H8.5 M5.5 9 V13' stroke='#222' stroke-width=1 fill='none' /><g fill='#fff' stroke='#111' stroke-width=1><rect x=0.5 y=0.5 width=2 height=2 /><rect x=11.5 y=4.5 width=2 height=2 /><rect x=1.5 y=7.5 width=2 height=2 /><rect x=13.5 y=10.5 width=2 height=2 /><rect x=4.5 y=13.5 width=2 height=2 /></g></svg>
<svg class=r style='left:235px;top:280px' width=18 height=8 viewBox='0 0 18 8'><rect x=1 y=2 width=3.5 height=3.5 fill='none' stroke='#111' stroke-width=1.2 /><rect x=13.5 y=2 width=3.5 height=3.5 fill='none' stroke='#111' stroke-width=1.2 /><path d='M4.5 4 L6.5 4 L8 0.5 L10 7 L11.5 3 L13.5 4' stroke='#6c3' stroke-width=1.3 fill='none' /></svg>
<svg class=r style='left:253px;top:293px' width=17 height=16 viewBox='0 0 17 16'><rect x=0.75 y=1 width=4.5 height=4.5 fill='#999' stroke='#111' stroke-width=1.3 /><path d='M5 3.2 H14 M11.5 0.5 L14.5 3.2 L11.5 6' stroke='#111' stroke-width=1.3 fill='none' /><path d='M0.5 13.5 L3 9.5 L6 14 L9 9.5 L12 14 L15 12' stroke='#6c3' stroke-width=1.3 fill='none' /></svg>
</body></html>
